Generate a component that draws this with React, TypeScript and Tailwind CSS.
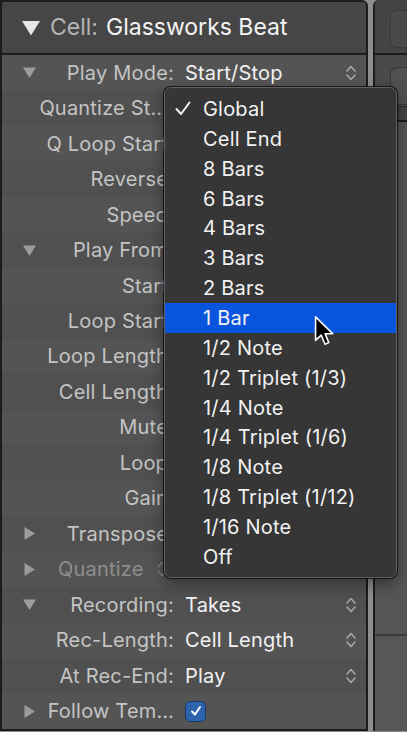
import React from "react";

type Row = {
  label: string;
  value?: string;
  arrow?: "down" | "right";
  stepper?: boolean;
  check?: boolean;
  dim?: boolean;
};

const rows: Row[] = [
  { label: "Play Mode:", value: "Start/Stop", arrow: "down", stepper: true },
  { label: "Quantize St…:" },
  { label: "Q Loop Start:" },
  { label: "Reverse:" },
  { label: "Speed:" },
  { label: "Play From:", arrow: "down" },
  { label: "Start:" },
  { label: "Loop Start:" },
  { label: "Loop Length:" },
  { label: "Cell Length:" },
  { label: "Mute:" },
  { label: "Loop:" },
  { label: "Gain:" },
  { label: "Transpose:", arrow: "right" },
  { label: "Quantize", arrow: "right", dim: true },
  { label: "Recording:", value: "Takes", arrow: "down", stepper: true },
  { label: "Rec-Length:", value: "Cell Length", stepper: true },
  { label: "At Rec-End:", value: "Play", stepper: true },
  { label: "Follow Tem…", arrow: "right", check: true },
];

const menuItems = [
  "Global",
  "Cell End",
  "8 Bars",
  "6 Bars",
  "4 Bars",
  "3 Bars",
  "2 Bars",
  "1 Bar",
  "1/2 Note",
  "1/2 Triplet (1/3)",
  "1/4 Note",
  "1/4 Triplet (1/6)",
  "1/8 Note",
  "1/8 Triplet (1/12)",
  "1/16 Note",
  "Off",
];

const font = { fontFamily: 'Inter, "Liberation Sans", sans-serif' };

function Triangle({ dir, className }: { dir: "down" | "right"; className?: string }) {
  return (
    <svg width="13" height="13" viewBox="0 0 13 13" className={className}>
      {dir === "down" ? (
        <polygon points="0,1.5 13,1.5 6.5,12" fill="currentColor" />
      ) : (
        <polygon points="1.5,0 12,6.5 1.5,13" fill="currentColor" />
      )}
    </svg>
  );
}

function Stepper({ className }: { className?: string }) {
  return (
    <svg width="12" height="20" viewBox="0 0 12 20" className={className}>
      <path d="M2 8 L6 3.5 L10 8" fill="none" stroke="currentColor" strokeWidth="1.6" strokeLinecap="round" strokeLinejoin="round" />
      <path d="M2 12 L6 16.5 L10 12" fill="none" stroke="currentColor" strokeWidth="1.6" strokeLinecap="round" strokeLinejoin="round" />
    </svg>
  );
}

function Cursor() {
  return (
    <svg width="22" height="32" viewBox="0 0 14 20" className="absolute left-[314px] top-[315px]">
      <path
        d="M1 1 L1 16 L4.6 12.6 L7 18.4 L9.4 17.4 L7.1 11.8 L12 11.8 Z"
        fill="#000"
        stroke="#fff"
        strokeWidth="1"
        strokeLinejoin="round"
      />
    </svg>
  );
}

function InspectorRow({ row, index }: { row: Row; index: number }) {
  const bg = index % 2 === 0 ? "bg-[#545454]" : "bg-[#505050]";

  if (row.dim) {
    return (
      <div className={`h-[35.5px] flex items-center pl-[21px] ${bg}`}>
        <Triangle dir="right" className="text-[#9a9a9a]" />
        <span className="ml-[22px] text-[20px] tracking-[0.01em] text-[#8e8e8e]">{row.label}</span>
        <Stepper className="ml-[12px] text-[#7c7c7c]" />
      </div>
    );
  }

  return (
    <div className={`h-[35.5px] flex items-center ${bg}`}>
      <div className="w-[172px] flex items-center pl-[21px]">
        <span className="w-[13px] flex-shrink-0">
          {row.arrow && <Triangle dir={row.arrow} className="text-[#9c9c9c]" />}
        </span>
        <span className="flex-1 text-right text-[20px] tracking-[0.01em] text-[#c4c4c4] whitespace-nowrap">
          {row.label}
        </span>
      </div>
      <div className="flex-1 ml-[11px] flex items-center">
        {row.value && <span className="text-[20px] tracking-[0.01em] text-[#f2f2f2]">{row.value}</span>}
        {row.check && (
          <span className="w-[21px] h-[21px] rounded-[5px] bg-[#2d63ad] border border-[#1a3a66] flex items-center justify-center">
            <svg width="14" height="14" viewBox="0 0 14 14">
              <path d="M3 7.5 L6 10.5 L11 3" fill="none" stroke="#fff" strokeWidth="2" strokeLinecap="round" strokeLinejoin="round" />
            </svg>
          </span>
        )}
      </div>
      {row.stepper && <Stepper className="mr-[9px] text-[#a6a6a6]" />}
    </div>
  );
}

export default function App() {
  return (
    <div className="relative w-[407px] h-[732px] overflow-hidden bg-[#8c8c8c] flex" style={font}>
      {/* inspector panel */}
      <div className="w-[368px] h-[731px] flex flex-col border-2 border-[#1c1c1c] rounded-tr-[6px] overflow-hidden bg-[#505050]">
        <div className="h-[53px] flex-shrink-0 flex items-center bg-[#464646] border-b-2 border-[#1c1c1c] pl-[20px]">
          <Triangle dir="down" className="w-[18px] h-[18px] text-[#e6e6e6]" />
          <span className="ml-[10px] text-[23px] text-[#b4b4b4]">Cell:</span>
          <span className="ml-[8px] text-[23px] text-[#f4f4f4]">Glassworks Beat</span>
        </div>
        {rows.map((row, i) => (
          <InspectorRow key={i} row={row} index={i} />
        ))}
      </div>

      {/* splitter */}
      <div className="w-[5px] bg-[#8e8e8e]" />

      {/* next panel */}
      <div className="flex-1 h-[731px] flex flex-col border-l-2 border-[#1c1c1c] rounded-tl-[6px] overflow-hidden bg-[#4e4e4e]">
        <div className="h-[55px] flex-shrink-0 bg-[#444444] border-b-2 border-[#1c1c1c] pt-[10px] pl-[15px]">
          <div className="h-[38px] rounded-l-[7px] bg-[#4a4a4a] border border-r-0 border-[#383838]" />
        </div>
        <div className="h-[52px] pt-[12px] pl-[15px] bg-[#4a4a4a] border-b border-[#2a2a2a]">
          <div className="h-[38px] rounded-l-[7px] bg-[#505050] border border-r-0 border-[#383838]" />
        </div>
        <div className="h-[15px] bg-[#424242] border-b-2 border-[#1c1c1c]" />
        <div className="flex-1 bg-[#555555]" />
        <div className="h-[2px] bg-[#3a3a3a]" />
        <div className="h-[95px] bg-[#575757]" />
      </div>

      {/* quantize start popup */}
      <div className="absolute left-[164px] top-[87px] w-[233px] h-[491px] rounded-[7px] bg-[#363636] border border-[#626262] shadow-[0_0_0_1px_rgba(0,0,0,0.7),0_6px_16px_rgba(0,0,0,0.4)] pt-[6px] overflow-hidden">
        {menuItems.map((item, i) => (
          <div
            key={item}
            className={`h-[29.87px] flex items-center text-[20px] tracking-[0.01em] text-[#f2f2f2] ${i === 7 ? "bg-[#0a55dd]" : ""}`}
          >
            <span className="w-[38px] flex-shrink-0 pl-[10px] flex items-center">
              {i === 0 && (
                <svg width="16" height="15" viewBox="0 0 16 15">
                  <path d="M1.5 8 L6 13 L14.5 1.5" fill="none" stroke="#f2f2f2" strokeWidth="2" strokeLinecap="round" strokeLinejoin="round" />
                </svg>
              )}
            </span>
            <span className="whitespace-nowrap">{item}</span>
          </div>
        ))}
      </div>

      <Cursor />
    </div>
  );
}
